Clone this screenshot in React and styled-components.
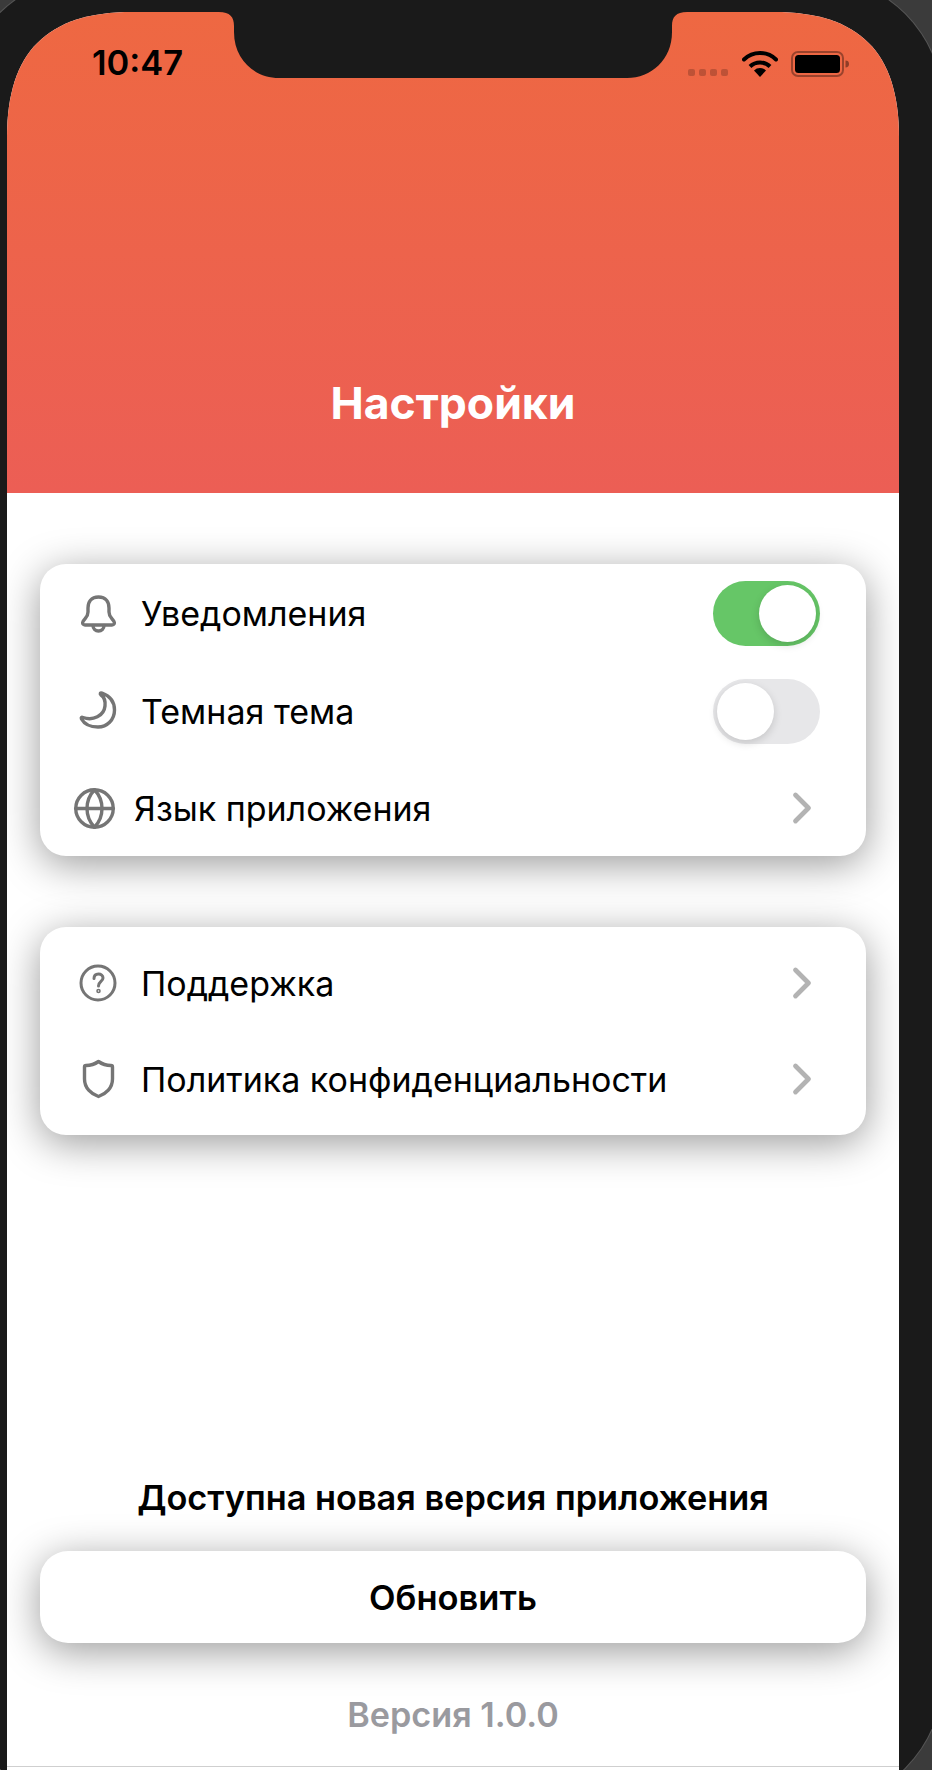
import React from 'react';
import styled, { createGlobalStyle } from 'styled-components';
import { Globe, ChevronRight } from 'lucide-react';

const GlobalStyle = createGlobalStyle`
  html, body {
    margin: 0;
    padding: 0;
    background: #3b3b3b;
    font-family: Inter, "Liberation Sans", sans-serif;
  }
`;

const Page = styled.div`
  width: 932px;
  height: 1770px;
  overflow: hidden;
  background: #3b3b3b;
`;

const Device = styled.div`
  box-sizing: border-box;
  width: 981.5px;
  height: 1830px;
  margin: -24px 0 0 -39px;
  padding: 36px 43.5px 0 46px;
  background: #1a1a1a;
  border-radius: 130px;
  box-shadow: 0 0 0 1px #555;
`;

const Screen = styled.div`
  position: relative;
  width: 892px;
  height: 1758px;
  display: flex;
  flex-direction: column;
  overflow: hidden;
  background: #fff;
  clip-path: path('M0 125C0 40 40 0 125 0H767C852 0 892 40 892 125V1758H0Z');
`;

const Notch = styled.svg`
  position: absolute;
  top: 0;
  left: 212px;
  width: 468px;
  height: 67px;
`;

const Header = styled.header`
  box-sizing: border-box;
  height: 481px;
  flex-shrink: 0;
  display: flex;
  flex-direction: column;
  justify-content: space-between;
  padding: 30px 50px 64px 85px;
  background: linear-gradient(180deg, #ee6842 0%, #ec5e55 100%);
`;

const StatusBar = styled.div`
  display: flex;
  justify-content: space-between;
  align-items: flex-start;
`;

const Time = styled.span`
  font-size: 34.5px;
  line-height: 42px;
  font-weight: 600;
  color: #000;
`;

const StatusIcons = styled.div`
  display: flex;
  align-items: flex-end;
  height: 35px;
`;

const Signal = styled.div`
  display: flex;
  gap: 4px;
  margin-right: 14px;
  margin-bottom: 1px;
`;

const SignalDot = styled.i`
  width: 7px;
  height: 7px;
  border-radius: 2px;
  background: rgba(0, 0, 0, 0.2);
`;

const Battery = styled.svg`
  width: 58px;
  height: 26px;
  margin-left: 13px;
`;

const Title = styled.h1`
  margin: 0 0 0 -35px;
  text-align: center;
  font-size: 44.5px;
  line-height: 52px;
  font-weight: 700;
  color: #fff;
`;

const Content = styled.main`
  flex: 1;
  display: flex;
  flex-direction: column;
  padding: 71px 33px 0;
`;

const Card = styled.section`
  display: flex;
  flex-direction: column;
  padding: ${(p) => p.$padY || 0}px 0;
  margin-bottom: 71px;
  background: #fff;
  border-radius: 26px;
  box-shadow: 0 8px 40px rgba(0, 0, 0, 0.4);
`;

const Row = styled.div`
  display: flex;
  align-items: center;
  height: ${(p) => p.$height}px;
  padding: 0 46px 0 ${(p) => p.$padLeft}px;
`;

const RowIcon = styled.span`
  display: flex;
  width: ${(p) => p.$size}px;
  margin-right: ${(p) => p.$gap}px;
  color: #757575;
`;

const Stroke = styled.svg`
  width: 44px;
  height: 44px;
  fill: none;
  stroke: currentColor;
  stroke-width: ${(p) => p.$weight || 3.4}px;
  stroke-linecap: round;
  stroke-linejoin: round;
`;

const Label = styled.span`
  flex: 1;
  padding-top: 2px;
  font-size: 34px;
  line-height: 42px;
  color: #000;
`;

const Chevron = styled.span`
  display: flex;
  margin-right: -8px;
  color: #b3b3b3;
`;

const Toggle = styled.div`
  box-sizing: border-box;
  display: flex;
  justify-content: ${(p) => (p.$on ? 'flex-end' : 'flex-start')};
  align-items: center;
  width: 107px;
  height: 65px;
  padding: 0 4px;
  border-radius: 33px;
  background: ${(p) => (p.$on ? '#66c667' : '#e7e7e9')};
`;

const Knob = styled.div`
  width: 57px;
  height: 57px;
  border-radius: 50%;
  background: #fff;
  box-shadow: 0 3px 8px rgba(0, 0, 0, 0.15);
`;

const Footer = styled.footer`
  margin-top: auto;
  display: flex;
  flex-direction: column;
  align-items: stretch;
  text-align: center;
`;

const Notice = styled.p`
  margin: 0 0 33px;
  font-size: 34.3px;
  line-height: 40px;
  font-weight: 600;
  color: #000;
`;

const UpdateButton = styled.button`
  height: 92px;
  padding: 2px 0 0;
  border: none;
  border-radius: 28px;
  background: #fff;
  font: 600 34.5px/40px Inter, "Liberation Sans", sans-serif;
  color: #000;
  box-shadow: 0 8px 40px rgba(0, 0, 0, 0.4);
`;

const Version = styled.p`
  margin: 52px 0 31px;
  font-size: 34.2px;
  line-height: 40px;
  font-weight: 600;
  color: #9a9a9f;
`;

const BottomLine = styled.div`
  height: 3px;
  flex-shrink: 0;
  border-top: 1px solid #cfcfcf;
`;

const BellIcon = () => (
  <Stroke viewBox="0 0 44 44">
    <path d="M22.500 6C15 6 12 11 12 17V21C12 26 9 27 7 30.500C6 32.500 7 34 9 34H36C38 34 39 32.500 38 30.500C36 27 33 26 33 21V17C33 11 30 6 22.500 6Z" />
    <path d="M17 34.500C17 38 19.500 40 22.500 40S28 38 28 34.500" />
  </Stroke>
);

const MoonIcon = () => (
  <Stroke viewBox="0 0 44 44">
    <path d="M26 4C34 7 38.500 13 38.500 21C38.500 31 31 38 22 38C14 38 8 34.500 5.500 30C4.800 28.500 5.500 28 7 28.500C17 32 28 27 29 17C29.500 12 28 8 25 6C23.500 4.500 24.500 3.500 26 4Z" />
  </Stroke>
);

const HelpIcon = () => (
  <Stroke viewBox="0 0 44 44" $weight={3}>
    <circle cx="22" cy="22" r="17" />
    <path d="M18 17.500C18 14.500 20 13 22.500 13C25 13 27 14.500 27 17C27 20.500 22.500 20.500 22.500 25" />
    <circle cx="22.500" cy="30" r="0.800" />
  </Stroke>
);

const ShieldIcon = () => (
  <Stroke viewBox="0 0 44 44">
    <path d="M22.500 4.500C26 7 31 8.500 35 8.500Q36.500 8.500 36.500 10V22C36.500 31 30 37 22.500 39.500C15 37 8.500 31 8.500 22V10Q8.500 8.500 10 8.500C14 8.500 19 7 22.500 4.500Z" />
  </Stroke>
);

const MoreLink = () => (
  <Chevron>
    <ChevronRight size={52} strokeWidth={2.2} />
  </Chevron>
);

const App = () => (
  <Page>
    <GlobalStyle />
    <Device>
      <Screen>
        <Header>
          <StatusBar>
            <Time>10:47</Time>
            <StatusIcons>
              <Signal>
                <SignalDot />
                <SignalDot />
                <SignalDot />
                <SignalDot />
              </Signal>
              <svg width="36" height="26" viewBox="0 0 36 26">
                <path d="M18 26l-6-6.500a8.500 8.500 0 0 1 12 0z" fill="#000" />
                <path d="M8 15.500a14.500 14.500 0 0 1 20 0" fill="none" stroke="#000" strokeWidth="4" />
                <path d="M2 8.500a23 23 0 0 1 32 0" fill="none" stroke="#000" strokeWidth="4" strokeLinecap="round" />
              </svg>
              <Battery viewBox="0 0 58 26">
                <rect x="1" y="1" width="51" height="24" rx="6" fill="none" stroke="#000" strokeOpacity="0.35" strokeWidth="2" />
                <rect x="4" y="4" width="45" height="18" rx="3.500" fill="#000" />
                <path d="M54.500 9.500a3.500 3.500 0 0 1 0 7z" fill="#000" fillOpacity="0.4" />
              </Battery>
            </StatusIcons>
          </StatusBar>
          <Title>Настройки</Title>
        </Header>
        <Notch viewBox="0 0 468 67">
          <path
            d="M0 0H468C457 0 453 5 453 14V20C453 48 432 66 408 66H60C36 66 15 48 15 20V14C15 5 11 0 0 0Z"
            fill="#1a1a1a"
          />
        </Notch>
        <Content>
          <Card>
            <Row $height={98} $padLeft={36}>
              <RowIcon $size={44} $gap={21}>
                <BellIcon />
              </RowIcon>
              <Label>Уведомления</Label>
              <Toggle $on>
                <Knob />
              </Toggle>
            </Row>
            <Row $height={98} $padLeft={36}>
              <RowIcon $size={44} $gap={21}>
                <MoonIcon />
              </RowIcon>
              <Label>Темная тема</Label>
              <Toggle>
                <Knob />
              </Toggle>
            </Row>
            <Row $height={96} $padLeft={32}>
              <RowIcon $size={48} $gap={14}>
                <Globe size={45} strokeWidth={1.8} />
              </RowIcon>
              <Label>Язык приложения</Label>
              <MoreLink />
            </Row>
          </Card>
          <Card $padY={8}>
            <Row $height={96} $padLeft={36}>
              <RowIcon $size={44} $gap={21}>
                <HelpIcon />
              </RowIcon>
              <Label>Поддержка</Label>
              <MoreLink />
            </Row>
            <Row $height={96} $padLeft={36}>
              <RowIcon $size={44} $gap={21}>
                <ShieldIcon />
              </RowIcon>
              <Label>Политика конфиденциальности</Label>
              <MoreLink />
            </Row>
          </Card>
          <Footer>
            <Notice>Доступна новая версия приложения</Notice>
            <UpdateButton>Обновить</UpdateButton>
            <Version>Версия 1.0.0</Version>
          </Footer>
        </Content>
        <BottomLine />
      </Screen>
    </Device>
  </Page>
);

export default App;
